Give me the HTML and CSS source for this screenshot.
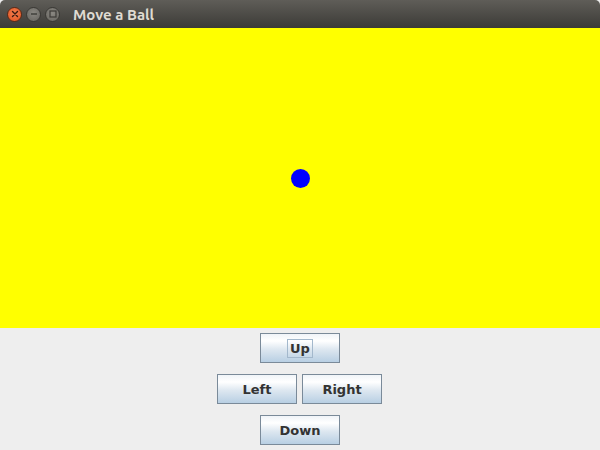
FILE: index.html
```html
<!DOCTYPE html>
<html>
<head>
<meta charset="utf-8">
<link rel="stylesheet" href="styles.css">
</head>
<body>
<div class="window">
  <div class="titlebar">
    <div class="controls">
      <span class="ctl close"><svg width="8" height="8" viewBox="0 0 8 8"><path d="M1.5 1.5L6.5 6.5M6.5 1.5L1.5 6.5" stroke="#3a1a10" stroke-width="1.4" stroke-linecap="round"/></svg></span>
      <span class="ctl min"><svg width="8" height="8" viewBox="0 0 8 8"><path d="M1 4H7" stroke="#3c3b37" stroke-width="1.4"/></svg></span>
      <span class="ctl max"><svg width="8" height="8" viewBox="0 0 8 8"><rect x="1" y="1" width="6" height="6" fill="none" stroke="#3c3b37" stroke-width="1.2"/></svg></span>
    </div>
    <div class="title">Move a Ball</div>
  </div>
  <div class="canvas">
    <div class="ball"></div>
  </div>
  <div class="panel">
    <div class="row"><button class="btn focused"><span class="lbl">Up</span></button></div>
    <div class="row shift"><button class="btn"><span class="lbl">Left</span></button><button class="btn"><span class="lbl">Right</span></button></div>
    <div class="row"><button class="btn"><span class="lbl">Down</span></button></div>
  </div>
</div>
</body>
</html>
```
FILE: styles.css
```css
html, body { margin: 0; padding: 0; }
body { width: 600px; height: 450px; overflow: hidden; background: #eeeeee; font-family: "DejaVu Sans", sans-serif; }
.window { display: flex; flex-direction: column; width: 600px; height: 450px; }
.titlebar {
  height: 28px; flex: none;
  background: linear-gradient(#5f5d58, #3c3b37);
  border-radius: 5px 5px 0 0;
  display: flex; align-items: center;
}
.controls { display: flex; gap: 4px; padding-left: 7px; align-items: center; }
.ctl { width: 15px; height: 15px; border-radius: 50%; display: flex; align-items: center; justify-content: center; box-sizing: border-box; }
.close { background: radial-gradient(circle at 50% 40%, #f37e4f, #e0511f); border: 1px solid #5a2a17; }
.min, .max { background: radial-gradient(circle at 50% 40%, #8a8882, #65635e); border: 1px solid #3a3935; }
.title { margin-left: 13px; color: #dfdbd2; font-weight: bold; font-size: 15px; font-family: "Ubuntu", "DejaVu Sans", sans-serif; }
.canvas { height: 300px; flex: none; background: #ffff00; position: relative; }
.ball { position: absolute; left: 291px; top: 141px; width: 19px; height: 19px; border-radius: 50%; background: #0000ff; }
.panel { flex: 1; display: flex; flex-direction: column; align-items: center; padding-top: 5px; gap: 11px; }
.row { display: flex; gap: 5px; }
.row.shift { margin-right: 1px; }
.btn {
  width: 80px; height: 30px; box-sizing: border-box; margin: 0; padding: 0;
  border: 1px solid #7a8a99;
  background: linear-gradient(#f0f4f8 0%, #ffffff 25%, #dde7f0 55%, #b8cfe3 100%);
  font-family: "DejaVu Sans", sans-serif; font-weight: bold; font-size: 13px; color: #333333;
  display: flex; align-items: center; justify-content: center;
}
.lbl { padding: 1px 2px; border: 1px solid transparent; line-height: 15px; }
.focused .lbl { border-color: #a3b8cc; }
```
